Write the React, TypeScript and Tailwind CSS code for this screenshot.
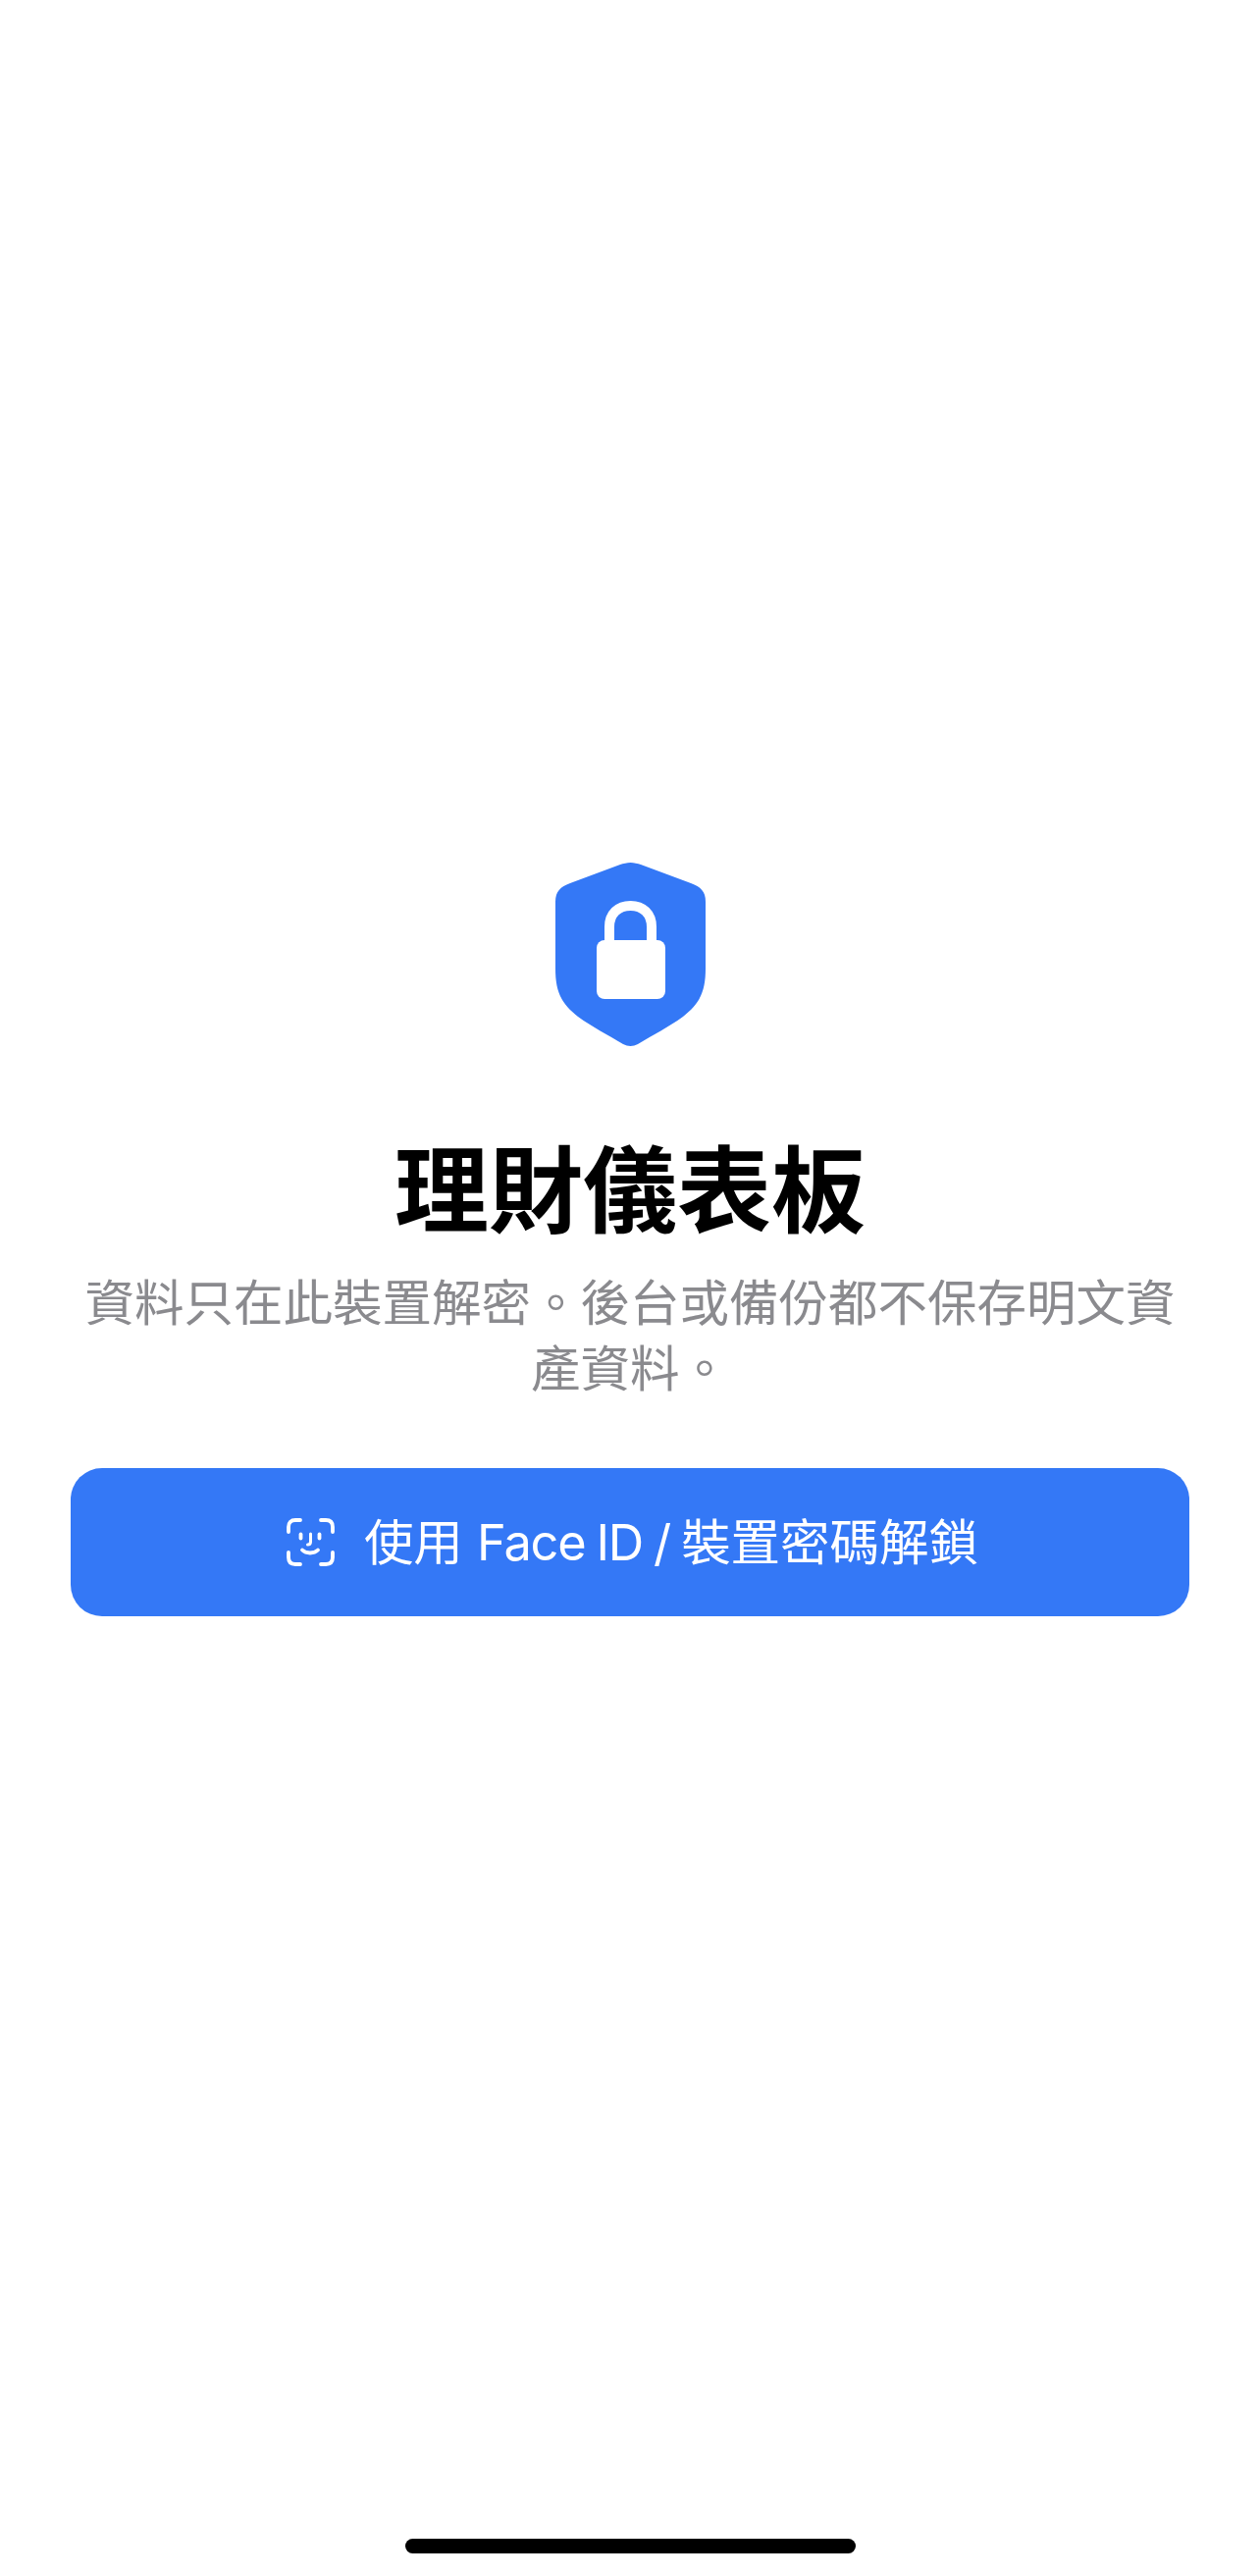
function ShieldLock() {
  return (
    <svg width="153" height="187" viewBox="0 0 153 187" className="block">
      <path
        fill="#3478f6"
        d="M76.5 0C80 0 84 1 87 2L138 21C148 25 153 29 153 40L153 108C153 130 148 143 130 157C115 168 100 175 84 185C79 187.5 74 187.5 69 185C53 175 38 168 23 157C5 143 0 130 0 108L0 40C0 29 5 25 15 21L66 2C69 1 73 0 76.5 0Z"
      />
      <path fill="none" stroke="#fff" strokeWidth="10" d="M55 82V65.5C55 52 64 44 76.5 44C89 44 98 52 98 65.5V82" />
      <rect x="42" y="79" width="70" height="60" rx="8" fill="#fff" />
    </svg>
  );
}

function FaceIdIcon() {
  return (
    <svg width="49" height="49" viewBox="0 0 49 49" fill="none" stroke="#fff" strokeWidth="3.8" strokeLinecap="round" className="block shrink-0">
      <path d="M2 14V9C2 4.5 4.5 2 9 2H14" />
      <path d="M35 2H40C44.5 2 47 4.5 47 9V14" />
      <path d="M2 35V40C2 44.5 4.5 47 9 47H14" />
      <path d="M35 47H40C44.5 47 47 44.5 47 40V35" />
      <path d="M14.5 16.5V20.5" />
      <path d="M33.5 16.5V20.5" />
      <path d="M24.5 16V24C24.5 26 23.5 27 21.5 27" strokeWidth="3" />
      <path d="M16 32.5C20 36.5 28 36.5 32 32.5" />
    </svg>
  );
}

export default function App() {
  return (
    <main className="relative flex min-h-[2625px] flex-col items-center justify-center bg-white px-[72px] pb-[100px] font-['Inter','Noto_Sans_CJK_TC',sans-serif]">
      <ShieldLock />

      <h1 className="mt-[87px] text-[96px] leading-[120px] font-bold text-black">理財儀表板</h1>

      <p className="mt-[21px] w-full px-[8px] text-center text-[50.5px] leading-[67px] text-[#8a8a8e]">
        資料只在此裝置解密。後台或備份都不保存明文資產資料。
      </p>

      <button className="mt-[68px] flex h-[151px] w-full items-center justify-center gap-[30px] rounded-[32px] bg-[#3478f6] pl-[5px] text-[50.5px] text-white">
        <FaceIdIcon />
        <span className="pt-[2px]">
          使用 <span className="tracking-[-1.2px] [word-spacing:-2px]">Face ID / </span>裝置密碼解鎖
        </span>
      </button>

      <div className="absolute bottom-[23px] left-[413px] h-[15px] w-[459px] rounded-full bg-black" />
    </main>
  );
}
